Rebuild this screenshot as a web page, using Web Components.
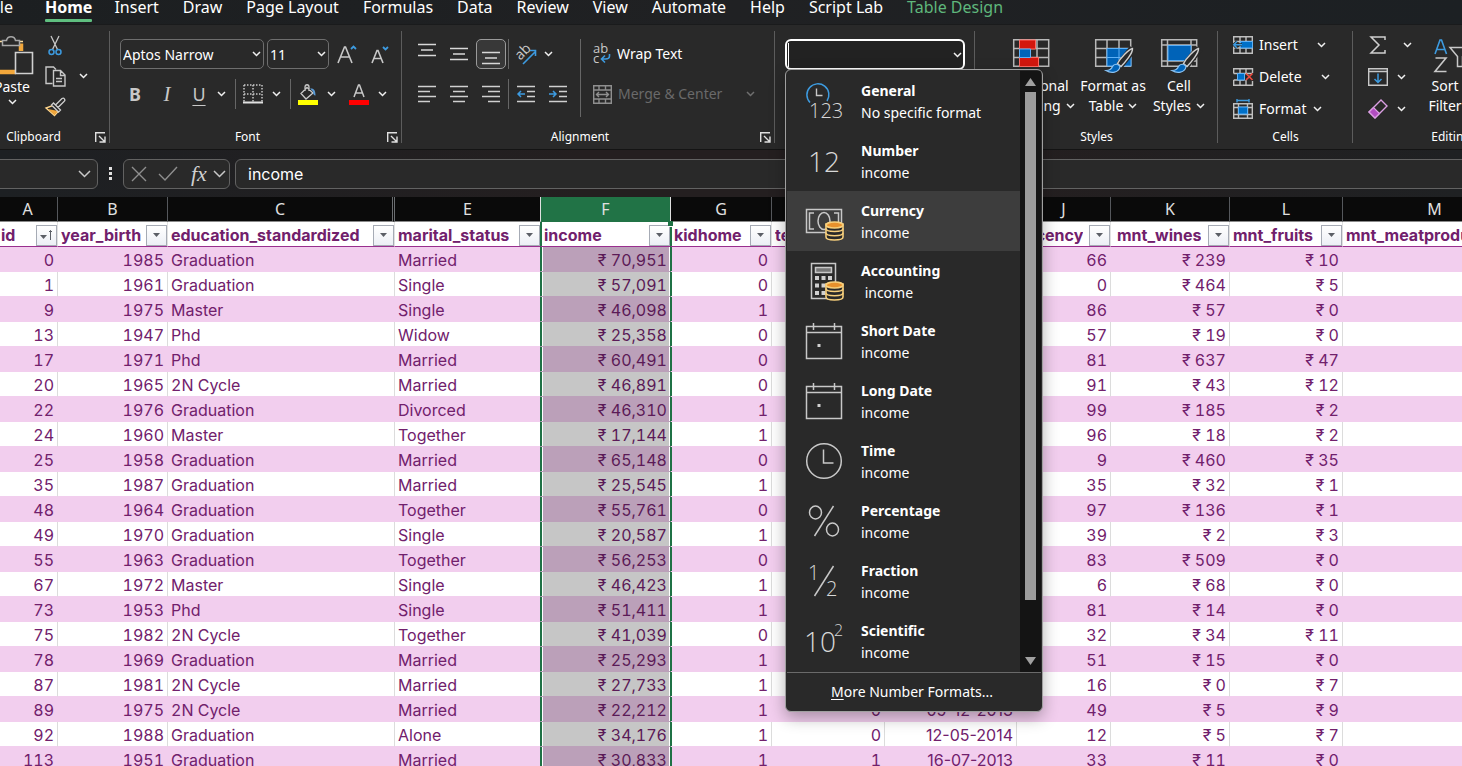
<!DOCTYPE html>
<html lang="en">
<head>
<meta charset="utf-8">
<title>Workbook</title>
<style>
html, body { margin: 0; height: 100%; }
body { background: #292929; font-family: "Noto Sans", "Open Sans", sans-serif; color: #fff; overflow: hidden; }
</style>
</head>
<body>
<excel-window></excel-window>

<script>
const define = (name, html, setup) => {
  const tpl = document.createElement('template');
  tpl.innerHTML = html;
  customElements.define(name, class extends HTMLElement {
    constructor() {
      super();
      this.attachShadow({ mode: 'open' }).append(tpl.content.cloneNode(true));
    }
    connectedCallback() { if (setup) setup(this, this.shadowRoot); }
  });
};

/* ---------- icons: [width, height, markup] ---------- */
const coins = `<g transform="translate(1 5)" fill="#292929" stroke="#f7cf7c" stroke-width="1.6"><path d="M21 18v13c0 2 4 3 8.500 3s8.500-1 8.500-3v-13z"/><path d="M21 22.500c0 2 4 3 8.500 3s8.500-1 8.500-3M21 26.800c0 2 4 3 8.500 3s8.500-1 8.500-3" fill="none"/><ellipse cx="29.500" cy="19" rx="8.500" ry="3" fill="#e8912d"/></g>`;
const calendar = `<path d="M2.500 5.500h35v32h-35zM2.500 11.500h35" /><path d="M9.500 2v7M30.500 2v7"/><path d="M13.500 23h3v3h-3z" fill="#d0d0d0" stroke="none"/>`;
const grid36 = `<path d="M.7.700h35v26.600h-35zM.7 9.500h35M.7 18.500h35M12 1v26M24 1v26" stroke="#b8b8b8" stroke-width="1.500"/>`;
const brush = `<path d="M38 9.500 25 26" stroke="#292929" stroke-width="8"/><path d="M37.500 9.500c-4 1-12.500 10-15 15l3.500 3c4-4 12-13.500 11.500-18z" stroke="#d0d0d0" stroke-width="1.400" fill="#292929"/><path d="M25 27.500c-2-3-6-3-7.500 0-1 2.500-3 4-6.500 4 5 3 13 2.500 14-4z" fill="#0063b8" stroke="#8cc4f4" stroke-width="1.200"/>`;
const ICONS = {
  chev: [9, 6, `<path d="M1 1l3.500 3.500L8 1" stroke="#f0f0f0" stroke-width="1.500"/>`],
  chevdim: [9, 6, `<path d="M1 1l3.500 3.500L8 1" stroke="#6f6f6f" stroke-width="1.500"/>`],
  chevwide: [13, 8, `<path d="M1 1l5.500 5.500L12 1" stroke="#c8c8c8" stroke-width="1.500"/>`],
  launcher: [11, 11, `<path d="M.7 10V.7H10M4 4l5.500 5.500M10 4.500V10H4.500" stroke="#e0e0e0" stroke-width="1.400"/>`],
  paste: [42, 40, `<path d="M5 8.500V37h20M30 8.500V16" stroke="#f2a73b" stroke-width="4.500"/><path d="M3 6.500h8M23 6.500h9" stroke="#ffdf9e" stroke-width="1.400"/><path d="M11.500 10.500v-5h4c1-5 8-5 9 0h4v5z" stroke="#a8a8a8" stroke-width="1.500" fill="#292929"/><path d="M24.500 17.500h17v21h-17z" stroke="#d0d0d0" stroke-width="1.600" fill="#292929"/>`],
  cut: [14, 21, `<path d="M3 1l6.500 13.500M11 1L4.500 14.500" stroke="#c8c8c8" stroke-width="1.300"/><circle cx="3.500" cy="17" r="2.500" stroke="#3d9be0" stroke-width="1.500"/><circle cx="10.500" cy="17" r="2.500" stroke="#3d9be0" stroke-width="1.500"/>`],
  copy: [21, 21, `<path d="M7.500 17.500h-6.500v-16.500h7.500l2.500 2.500" stroke="#c8c8c8" stroke-width="1.400"/><path d="M8.500 4.500h7l4.500 4.500v11h-11.500zM15.500 4.500v5h4.500M11 12.500h6M11 15.500h6" stroke="#c8c8c8" stroke-width="1.400"/>`],
  painter: [21, 20, `<path d="M1 11l8.500 7.500 4.500-5-5-5.500z" fill="#292929" stroke="#ffd68c" stroke-width="1.400"/><path d="M3 12l6.500 6 3.500-4z" fill="#f2a73b"/><path d="M6.500 8l2-2 7 7-2 2zM10.500 8l6.500-6.500q1.500-1 2.500.5t-.5 2.500L13 10.500" stroke="#d0d0d0" stroke-width="1.300" fill="#292929"/>`],
  grow: [20, 20, `<path d="M1 19L7.500 3h1L15 19M3.500 13h9" stroke="#c8c8c8" stroke-width="1.600"/><path d="M14 5l2.500-2.500L19 5" stroke="#3d9be0" stroke-width="1.800"/>`],
  shrink: [20, 20, `<path d="M2 19L7 6.500h1L13 19M4 14.500h7" stroke="#c8c8c8" stroke-width="1.600"/><path d="M13 3l2.500 2.500L18 3" stroke="#3d9be0" stroke-width="1.800"/>`],
  borders: [20, 20, `<path d="M1 1h18M1 10h18M1 1v17M10 1v17M19 1v17" stroke="#c8c8c8" stroke-width="1.500" stroke-dasharray="1.500 1.500"/><path d="M0 18.500h20" stroke="#e0e0e0" stroke-width="2"/>`],
  bucket: [20, 22, `<path d="M9 4.500l6 5.500-7 6-5-5.500zM7 8V4c0-3 4-3 4 0v4" stroke="#c8c8c8" stroke-width="1.300"/><path d="M12 5.500c4-.5 5.500 2 5.500 7-2 0-2.500-2.500-2.500-4z" fill="#5b9bd5"/><path d="M0 17h20v5H0z" fill="#ff0"/>`],
  fontcolor: [20, 22, `<path d="M5 14L9.500 2h1L15 14M6.500 10h7" stroke="#c8c8c8" stroke-width="1.500"/><path d="M0 17h20v5H0z" fill="#f00"/>`],
  atop: [18, 14, `<path d="M0 1.500h18M3 7h12M0 12.500h18" stroke="#d8d8d8" stroke-width="1.400"/>`],
  alignl: [18, 18, `<path d="M0 1.500h18M0 6.500h12M0 11.500h18M0 16.500h12" stroke="#d0d0d0" stroke-width="1.600"/>`],
  alignc: [18, 18, `<path d="M0 1.500h18M3 6.500h12M0 11.500h18M3 16.500h12" stroke="#d0d0d0" stroke-width="1.600"/>`],
  alignr: [18, 18, `<path d="M0 1.500h18M6 6.500h12M0 11.500h18M6 16.500h12" stroke="#d0d0d0" stroke-width="1.600"/>`],
  outdent: [18, 18, `<path d="M0 1.500h18M10 6.500h8M10 11.500h8M0 16.500h18" stroke="#d0d0d0" stroke-width="1.600"/><path d="M8 9H1M4 6L1 9l3 3" stroke="#3d9be0" stroke-width="1.500"/>`],
  indent: [18, 18, `<path d="M0 1.500h18M10 6.500h8M10 11.500h8M0 16.500h18" stroke="#d0d0d0" stroke-width="1.600"/><path d="M0 9h7M4 6l3 3-3 3" stroke="#3d9be0" stroke-width="1.500"/>`],
  orient: [21, 21, `<text class="reg" text-anchor="middle" transform="translate(10 11) rotate(-45)" font-size="14" fill="#c8c8c8">ab</text><path d="M7 20L19 8M14 6.500h5.500V12" stroke="#3d9be0" stroke-width="1.600"/>`],
  wrap: [18, 20, `<text class="reg" x="0" y="9" font-size="13" fill="#c8c8c8">ab</text><text class="reg" x="0" y="19" font-size="13" fill="#c8c8c8">c</text><path d="M16.500 10v2q0 3-4 3H8.500M12 11.500L8.500 15l3.500 3.500" stroke="#3d9be0" stroke-width="1.600"/>`],
  merge: [19, 19, `<path d="M.7.700h17.600v17.600H.7zM.7 5h17.600M.7 14h17.600M6 .7V5M12.500.7V5M6 14v4M12.500 14v4M3.500 9.500h12M6 7L3.500 9.500 6 12M13 7l2.500 2.500L13 12" stroke="#8f8f8f" stroke-width="1.400"/>`],
  cond: [36, 28, `${grid36}<path d="M6.500 1h16v9h-16zM6.500 18.500h19v9h-19z" fill="#d3170e" stroke="#ff6b62"/><path d="M6.500 10h11v8.500h-11z" fill="#0063b8" stroke="#5fb0f5"/>`],
  fmttable: [40, 35, `${grid36}<path d="M12 9.500h24v17.500H12z" fill="#0063b8" stroke="#5fb0f5" /><path d="M24 10v17M12 18.500h24" stroke="#5fb0f5"/>${brush}`],
  cellstyle: [40, 35, `<path d="M.7.700h35v26.600h-35zM.7 6h35M6.500 1v26M.7 22h35M30 1v26" stroke="#b8b8b8" stroke-width="1.500"/><path d="M7 6.500h23v15H7z" fill="#0063b8" stroke="#5fb0f5"/>${brush}`],
  insert: [20, 18, `<path d="M.7.700h18.600v16.600H.7zM.7 5.500h18M.7 12h18M7 1v16M13 1v16" stroke="#c0c0c0" stroke-width="1.400"/><path d="M7.500 5.500h12V12h-12z" fill="#0070c8" stroke="#5fb0f5"/><path d="M9 8.800H1M4 5.500L.8 8.800 4 12" stroke="#292929" stroke-width="3"/><path d="M9 8.800H1M4 5.500L.8 8.800 4 12" stroke="#3d9be0" stroke-width="1.500"/>`],
  delete: [20, 18, `<path d="M19.500 5V.7H.7V5.500M.7 12v5.300h18.800V13M.7 5.500H19M.7 12h11M7 1v4M13 1v4M7 12v5M13 12v5" stroke="#c0c0c0" stroke-width="1.400"/><path d="M4.500 5.500h7V12h-7z" fill="#0070c8" stroke="#5fb0f5"/><path d="M13 5.500l6.500 6.500M19.500 5.500L13 12" stroke="#f04a3e" stroke-width="1.600"/>`],
  format: [20, 20, `<path d="M4 0v3.500M16 0v3.500M4 1.500h12" stroke="#3d9be0" stroke-width="1.400"/><path d="M.7 4.700h18.600v14.600H.7zM.7 8.500h18.600M.7 15.500h18.600M5.500 5v14M14.500 5v14" stroke="#c0c0c0" stroke-width="1.400"/><path d="M5.500 8h9v7h-9z" fill="#0070c8" stroke="#5fb0f5"/>`],
  sigma: [16, 18, `<path d="M15 4V1H1l8 8-8 8h14v-3" stroke="#d0d0d0" stroke-width="1.500"/>`],
  fill: [20, 18, `<path d="M.7.700h18.600v16.600H.7zM.7 3.500h18.600" stroke="#c8c8c8" stroke-width="1.400"/><path d="M10 5.500v9M6.500 11l3.500 3.500 3.500-3.500" stroke="#3d9be0" stroke-width="1.500"/>`],
  eraser: [20, 20, `<path d="M1 13L13 1l6 6L7 19z" stroke="#dca0e4" stroke-width="1.400"/><path d="M1 13l4.500-4.500 6 6L7 19z" fill="#b14cc0" stroke="#dca0e4" stroke-width="1.200"/>`],
  sort: [36, 34, `<path d="M1 15L6 1h1.500l5 14M3 10.500h8" stroke="#3d9be0" stroke-width="1.600"/><path d="M1.500 19h10.500L1 32.500h11.500" stroke="#c8c8c8" stroke-width="1.600"/><path d="M16 8.500h20l-7.500 9v10l-5 0v-10z" stroke="#c8c8c8" stroke-width="1.500"/>`],
  cancel: [16, 16, `<path d="M1 1l14 14M15 1L1 15" stroke="#8f8f8f" stroke-width="1.400"/>`],
  check: [20, 16, `<path d="M1 8l6 6L19 1" stroke="#8f8f8f" stroke-width="1.400"/>`],
  dots: [3, 14, `<path d="M0 0h3v3H0zM0 5h3v3H0zM0 10h3v3H0z" fill="#e0e0e0"/>`],
  tri: [7, 4, `<path d="M0 0h7L3.500 4z" fill="#5b5f66"/>`],
  sorted: [13, 10, `<path d="M0 5h7L3.500 9z" fill="#5b5f66"/><path d="M10.500 10V.5M9 2l1.500-1.500L12 2" stroke="#5b5f66"/>`],
  up: [11, 8, `<path d="M5.500 0L11 8H0z" fill="#a0a0a0"/>`],
  down: [11, 8, `<path d="M0 0h11L5.500 8z" fill="#a0a0a0"/>`],
  general: [40, 40, `<path d="M6 21.500A11 11 0 1 1 23 20" stroke="#3d9be0" stroke-width="1.500"/><path d="M12.500 7.500v7h6" stroke="#c8c8c8" stroke-width="1.400"/><text x="5" y="37" font-size="20" fill="#d8d8d8">123</text>`],
  number: [40, 40, `<text x="4" y="31" font-size="28" fill="#d8d8d8">12</text>`],
  currency: [40, 40, `<path d="M2.500 8.500h35v23h-35z" /><path d="M10 12H5.500v16H10M30 12h4.500v16H30" /><ellipse cx="20" cy="20" rx="6" ry="8.500"/>${coins}`],
  accounting: [40, 40, `<path d="M7.500 2.500h24v35h-24z"/><path d="M11.500 6.500h16v5h-16z" fill="#777"/><path d="M11 15h4v4h-4zM17.500 15h4v4h-4zM24 15h4v4h-4zM11 22.500h4v4h-4zM17.500 22.500h4v4h-4zM11 30h4v4h-4zM17.500 30h4v4h-4z" fill="#d0d0d0" stroke="none"/>${coins}`],
  date: [40, 40, calendar],
  time: [40, 40, `<circle cx="20" cy="20" r="17.300"/><path d="M19.500 8.500v13.500h10"/>`],
  percent: [40, 40, `<ellipse cx="11.500" cy="11.500" rx="6" ry="6.500"/><ellipse cx="28.500" cy="28.500" rx="6" ry="6.500"/><path d="M29.500 5L10.500 35"/>`],
  fraction: [40, 40, `<path d="M29.500 5L10.500 35"/><text x="4" y="19" font-size="20" fill="#d8d8d8">1</text><text x="22" y="35" font-size="20" fill="#d8d8d8">2</text>`],
  scientific: [40, 40, `<text x="0" y="31" font-size="28" fill="#d8d8d8">10</text><text x="30" y="15" font-size="16" fill="#d8d8d8">2</text>`]
};
const OUTLINED = ['currency', 'accounting', 'date', 'time', 'percent', 'fraction'];

customElements.define('rb-icon', class extends HTMLElement {
  connectedCallback() {
    if (this.shadowRoot) return;
    const name = this.getAttribute('name');
    const [w, h, body] = ICONS[name];
    const stroke = OUTLINED.includes(name) ? 'stroke="#c8c8c8" stroke-width="1.500"' : '';
    this.attachShadow({ mode: 'open' }).innerHTML = `<style>
      :host { display: block; flex: none; }
      svg { display: block; overflow: visible; }
      text { font-family: "Open Sans", "Noto Sans", sans-serif; font-weight: 300; stroke: none; }
      text.reg { font-weight: 400; }
    </style><svg width="${w}" height="${h}" viewBox="0 0 ${w} ${h}" fill="none" aria-hidden="true" ${stroke}>${body}</svg>`;
  }
});

/* ---------- ribbon building blocks ---------- */
define('rb-button', `<style>
  :host { display: block; flex: none; width: 32px; height: 30px; }
  :host([size="chev"]) { width: 20px; }
  :host([size="icon"]) { width: 26px; }
  :host([size="mid"]) { width: 29px; }
  :host([size="text"]) { width: auto; }
  :host([size="big"]) { width: 66px; height: 88px; }
  button { all: unset; box-sizing: border-box; width: 100%; height: 100%; display: flex; align-items: center; justify-content: center; gap: 6px; white-space: nowrap; font-size: 14px; line-height: 20px; color: inherit; }
  :host([pressed]) button { width: 30px; margin-left: 1px; border: 1px solid #9a9a9a; border-radius: 5px; background: #383838; }
  :host([size="text"]) button { justify-content: flex-start; }
  :host([size="big"]) button { flex-direction: column; justify-content: flex-start; gap: 2px; }
</style><button type="button"><slot></slot></button>`, (host, root) => {
  const label = host.getAttribute('label');
  if (label) root.querySelector('button').setAttribute('aria-label', label);
});

define('rb-sep', `<style>
  :host { display: block; flex: none; width: 1px; height: 30px; margin: 0 4px; background: #666; }
  :host([tight]) { margin: 0 1px; }
  :host([tall]) { height: 78px; margin-left: 6px; }
</style>`);

define('rb-combo', `<style>
  :host { display: block; flex: none; position: relative; }
  select { appearance: none; box-sizing: border-box; width: 100%; height: 30px; margin: 0; padding: 0 20px 0 2px; border: 1px solid #6e6e6e; border-radius: 5px; background: #292929; color: #fff; font: 14px "Noto Sans", sans-serif; display: block; }
  rb-icon { position: absolute; right: 3px; top: 12px; pointer-events: none; }
</style><select></select><rb-icon name="chev"></rb-icon>`, (host, root) => {
  const s = root.querySelector('select');
  s.setAttribute('aria-label', host.getAttribute('label'));
  s.append(new Option(host.getAttribute('value')));
});

define('rb-group', `<style>
  :host { display: flex; flex: none; flex-direction: column; box-sizing: border-box; height: 124px; position: relative; }
  .body { height: 100px; flex: none; }
  footer { display: flex; align-items: center; height: 24px; padding: 0 4px; font-size: 12px; line-height: 24px; }
  footer span { flex: 1; text-align: center; }
  rb-icon { margin-left: 6px; }
  :host::after { content: ""; position: absolute; right: 0; top: 6px; height: 112px; width: 1px; background: #5c5c5c; }
  :host([last])::after { display: none; }
</style><div class="body"><slot></slot></div><footer><span></span></footer>`, (host, root) => {
  root.querySelector('span').textContent = host.getAttribute('label') || '';
  if (host.hasAttribute('launcher')) {
    const i = document.createElement('rb-icon');
    i.setAttribute('name', 'launcher');
    root.querySelector('footer').append(i);
  }
});

/* ---------- tabs ---------- */
define('rb-tabs', `<style>
  :host { display: block; height: 24px; background: linear-gradient(90deg, #1c1f21, #202123 50%, #1c2023); overflow: hidden; border-bottom: 1px solid #1a1b1c; }
  nav { display: flex; gap: 24px; height: 24px; margin-left: -13px; }
  a { color: #fff; text-decoration: none; font-size: 16px; line-height: 22px; height: 22px; margin-top: -4px; white-space: nowrap; }
  a:first-child { width: 26px; margin-right: 8px; text-align: right; }
  a.on { font-weight: 700; margin-right: -2px; position: relative; }
  a.on::after { content: ""; position: absolute; left: 0; right: 0; top: 23px; height: 3px; border-radius: 1px; background: #5fbf7f; }
  a.ctx { color: #5fb77c; }
</style><nav aria-label="Ribbon tabs"><a href="#">File</a><a href="#" class="on">Home</a><a href="#">Insert</a><a href="#">Draw</a><a href="#">Page Layout</a><a href="#">Formulas</a><a href="#">Data</a><a href="#">Review</a><a href="#">View</a><a href="#">Automate</a><a href="#">Help</a><a href="#">Script Lab</a><a href="#" class="ctx">Table Design</a></nav>`);

/* ---------- ribbon ---------- */
define('rb-ribbon', `<style>
  :host { display: flex; height: 124px; background: #292929; overflow: hidden; }
  .row { display: flex; align-items: center; height: 30px; }
  .rows { display: flex; flex-direction: column; gap: 10px; padding-top: 14px; }
  .row.split { align-items: flex-start; padding: 14px 0 0 9px; height: auto; }
  .split .rows { padding-top: 0; }
  .clip { width: 136px; margin-left: -26px; }
  .clipbody { display: flex; padding: 5px 0 0 5px; }
  .clipbody rb-button[size="big"] { margin-top: 5px; margin-right: -3px; }
  .cliprows { display: flex; flex-direction: column; gap: 1px; }
  .font { width: 292px; } .font .rows { padding-left: 9px; }
  .font .combos { gap: 3px; padding-left: 1px; }
  .family { width: 144px; } .size { width: 62px; }
  .align { width: 373px; } .num { width: 200px; } .styles { width: 243px; } .cells { width: 135px; } .edit { width: 196px; }
  .gap { margin-left: 5px; }
  .near { margin-left: -4px; }
  .b { font-weight: 700; font-size: 18px; color: #c8c8c8; }
  .i { font-style: italic; font-family: "Liberation Serif", serif; font-size: 21px; color: #c8c8c8; }
  .u { text-decoration: underline; text-underline-offset: 4px; font-size: 18px; color: #c8c8c8; }
  .high { padding-bottom: 8px; }
  .low { padding-top: 8px; }
  .dim { color: #6a6a6a; }
  .far { margin-left: 18px; }
  .wraps { padding-left: 8px; }
  .numbox { margin: 14px 0 0 10px; width: 180px; height: 31px; box-sizing: border-box; border: 2px solid #fff; border-radius: 6px; display: flex; align-items: center; background: #222; }
  .numbox input { all: unset; flex: 1; min-width: 0; height: 24px; margin-left: 1px; border-left: 1px solid #fff; }
  .numbox rb-button { margin-right: -4px; }
  .bigs { display: flex; padding: 14px 0 0 23px; }
  .bigs rb-button:nth-child(2) { margin-left: 16px; }
  .lines { display: grid; justify-items: center; line-height: 20px; }
  .ic { height: 35px; }
  .off { margin-left: 4px; }
  .ln { display: flex; align-items: center; gap: 5px; }
  .three { display: flex; flex-direction: column; gap: 2px; padding: 5px 0 0 15px; }
  .ef { display: flex; }
  .ef .three { width: 54px; padding-left: 12px; }
  .sortf { padding-top: 14px; }
  .mid { margin-left: 6px; } .mid2 { margin-left: 14px; }
</style>
<rb-group class="clip" label="Clipboard" launcher>
  <div class="clipbody">
    <rb-button size="big"><rb-icon name="paste"></rb-icon><span>Paste</span><rb-icon name="chev"></rb-icon></rb-button>
    <div class="cliprows">
      <rb-button size="icon" label="Cut"><rb-icon name="cut"></rb-icon></rb-button>
      <div class="row"><rb-button size="icon" label="Copy"><rb-icon name="copy"></rb-icon></rb-button><rb-button class="gap" size="chev" label="Copy options"><rb-icon name="chev"></rb-icon></rb-button></div>
      <rb-button size="icon" label="Format Painter"><rb-icon name="painter"></rb-icon></rb-button>
    </div>
  </div>
</rb-group>
<rb-group class="font" label="Font" launcher>
  <div class="rows">
    <div class="row combos"><rb-combo class="family" label="Font" value="Aptos Narrow"></rb-combo><rb-combo class="size" label="Font size" value="11"></rb-combo><rb-button size="mid" label="Increase font size"><rb-icon name="grow"></rb-icon></rb-button><rb-button label="Decrease font size"><rb-icon name="shrink"></rb-icon></rb-button></div>
    <div class="row"><rb-button><span class="b">B</span></rb-button><rb-button><span class="i">I</span></rb-button><rb-button><span class="u">U</span></rb-button><rb-button class="near" size="chev" label="Underline options"><rb-icon name="chev"></rb-icon></rb-button><rb-sep></rb-sep><rb-button size="icon" label="Borders"><rb-icon name="borders"></rb-icon></rb-button><rb-button size="chev" label="Border options"><rb-icon name="chev"></rb-icon></rb-button><rb-sep></rb-sep><rb-button size="icon" label="Fill color"><rb-icon name="bucket"></rb-icon></rb-button><rb-button size="chev" label="Fill options"><rb-icon name="chev"></rb-icon></rb-button><rb-button class="gap" size="icon" label="Font color"><rb-icon name="fontcolor"></rb-icon></rb-button><rb-button size="chev" label="Font color options"><rb-icon name="chev"></rb-icon></rb-button></div>
  </div>
</rb-group>
<rb-group class="align" label="Alignment" launcher>
  <div class="row split">
    <div class="rows">
      <div class="row"><rb-button label="Top align"><rb-icon name="atop" class="high"></rb-icon></rb-button><rb-button label="Middle align"><rb-icon name="atop"></rb-icon></rb-button><rb-button pressed label="Bottom align"><rb-icon name="atop" class="low"></rb-icon></rb-button><rb-sep tight></rb-sep><rb-button label="Orientation"><rb-icon name="orient"></rb-icon></rb-button><rb-button class="near" size="chev" label="Orientation options"><rb-icon name="chev"></rb-icon></rb-button></div>
      <div class="row"><rb-button label="Align left"><rb-icon name="alignl"></rb-icon></rb-button><rb-button label="Center"><rb-icon name="alignc"></rb-icon></rb-button><rb-button label="Align right"><rb-icon name="alignr"></rb-icon></rb-button><rb-sep tight></rb-sep><rb-button label="Decrease indent"><rb-icon name="outdent"></rb-icon></rb-button><rb-button label="Increase indent"><rb-icon name="indent"></rb-icon></rb-button></div>
    </div>
    <rb-sep tall></rb-sep>
    <div class="rows wraps">
      <rb-button size="text"><rb-icon name="wrap"></rb-icon><span>Wrap Text</span></rb-button>
      <div class="row dim"><rb-button size="text"><rb-icon name="merge"></rb-icon><span>Merge &amp; Center</span></rb-button><rb-button class="far" size="chev" label="Merge options"><rb-icon name="chevdim"></rb-icon></rb-button></div>
    </div>
  </div>
</rb-group>
<rb-group class="num" label="Number">
  <div class="numbox"><input type="text" aria-label="Number format"><rb-button size="chev" label="Number format list"><rb-icon name="chev"></rb-icon></rb-button></div>
</rb-group>
<rb-group class="styles" label="Styles">
  <div class="bigs">
    <rb-button size="big"><rb-icon class="ic" name="cond"></rb-icon><span class="lines"><span>Conditional</span><span class="ln">Formatting <rb-icon name="chev"></rb-icon></span></span></rb-button>
    <rb-button size="big"><rb-icon class="ic off" name="fmttable"></rb-icon><span class="lines"><span>Format as</span><span class="ln">Table <rb-icon name="chev"></rb-icon></span></span></rb-button>
    <rb-button size="big"><rb-icon class="ic off" name="cellstyle"></rb-icon><span class="lines"><span>Cell</span><span class="ln">Styles <rb-icon name="chev"></rb-icon></span></span></rb-button>
  </div>
</rb-group>
<rb-group class="cells" label="Cells">
  <div class="three">
    <div class="row"><rb-button size="text"><rb-icon name="insert"></rb-icon><span>Insert</span></rb-button><rb-button class="mid2" size="chev" label="Insert options"><rb-icon name="chev"></rb-icon></rb-button></div>
    <div class="row"><rb-button size="text"><rb-icon name="delete"></rb-icon><span>Delete</span></rb-button><rb-button class="mid2" size="chev" label="Delete options"><rb-icon name="chev"></rb-icon></rb-button></div>
    <rb-button size="text"><rb-icon name="format"></rb-icon><span>Format</span><rb-icon name="chev"></rb-icon></rb-button>
  </div>
</rb-group>
<rb-group class="edit" label="Editing" last>
  <div class="ef">
    <div class="three">
      <div class="row"><rb-button size="icon" label="AutoSum"><rb-icon name="sigma"></rb-icon></rb-button><rb-button class="mid" size="chev" label="AutoSum options"><rb-icon name="chev"></rb-icon></rb-button></div>
      <div class="row"><rb-button size="icon" label="Fill"><rb-icon name="fill"></rb-icon></rb-button><rb-button size="chev" label="Fill options"><rb-icon name="chev"></rb-icon></rb-button></div>
      <div class="row"><rb-button size="icon" label="Clear"><rb-icon name="eraser"></rb-icon></rb-button><rb-button size="chev" label="Clear options"><rb-icon name="chev"></rb-icon></rb-button></div>
    </div>
    <rb-button class="sortf" size="big"><rb-icon class="ic" name="sort"></rb-icon><span class="lines"><span>Sort &amp;</span><span class="ln">Filter <rb-icon name="chev"></rb-icon></span></span></rb-button>
  </div>
</rb-group>`);

/* ---------- formula bar ---------- */
define('formula-bar', `<style>
  :host { display: flex; align-items: center; height: 48px; box-sizing: border-box; overflow: hidden; background: linear-gradient(90deg, #1d2023, #241f20 40%, #241f20 70%, #1f2123); border-top: 1px solid #141414; }
  .box { box-sizing: border-box; height: 30px; border: 1px solid #626262; border-radius: 6px; background: #292929; display: flex; align-items: center; flex: none; }
  .name { width: 108px; margin-left: -10px; padding-right: 6px; }
  input { all: unset; flex: 1; min-width: 0; font: 16px/28px Inter, sans-serif; }
  button { all: unset; display: flex; justify-content: center; align-items: center; }
  .dots { margin: 0 11px; }
  .tools { width: 107px; gap: 11px; padding-left: 7px; }
  .fx { font: italic 22px/26px "Liberation Serif", serif; color: #d0d0d0; }
  .tools .fx { margin-left: 2px; margin-right: -5px; }
  .formula { flex: 1; margin-left: 5px; margin-right: -8px; padding-left: 12px; }
</style>
<div class="box name"><input type="text" aria-label="Name box"><button type="button" aria-label="Name list"><rb-icon name="chevwide"></rb-icon></button></div>
<rb-icon class="dots" name="dots"></rb-icon>
<div class="box tools"><button type="button" aria-label="Cancel"><rb-icon name="cancel"></rb-icon></button><button type="button" aria-label="Enter"><rb-icon name="check"></rb-icon></button><button type="button" class="fx">fx</button><button type="button" aria-label="Function list"><rb-icon name="chevwide"></rb-icon></button></div>
<div class="box formula"><input type="text" aria-label="Formula" value="income"></div>`);

/* ---------- sheet ---------- */
const COLS = [['A', 'id', 60], ['B', 'year_birth', 110], ['C', 'education_standardized', 227], ['E', 'marital_status', 146], ['F', 'income', 130], ['G', 'kidhome', 101], ['H', 'teenhome', 113], ['I', 'dt_customer', 132], ['J', 'recency', 94], ['K', 'mnt_wines', 119], ['L', 'mnt_fruits', 113], ['M', 'mnt_meatproducts', 184]];
const ROWS = `0|1985|Graduation|Married|70,951|0|||66|239|10
1|1961|Graduation|Single|57,091|0|||0|464|5
9|1975|Master|Single|46,098|1|||86|57|0
13|1947|Phd|Widow|25,358|0|||57|19|0
17|1971|Phd|Married|60,491|0|||81|637|47
20|1965|2N Cycle|Married|46,891|0|||91|43|12
22|1976|Graduation|Divorced|46,310|1|||99|185|2
24|1960|Master|Together|17,144|1|||96|18|2
25|1958|Graduation|Married|65,148|0|||9|460|35
35|1987|Graduation|Married|25,545|1|||35|32|1
48|1964|Graduation|Together|55,761|0|||97|136|1
49|1970|Graduation|Single|20,587|1|||39|2|3
55|1963|Graduation|Together|56,253|0|||83|509|0
67|1972|Master|Single|46,423|1|||6|68|0
73|1953|Phd|Single|51,411|1|||81|14|0
75|1982|2N Cycle|Together|41,039|0|||32|34|11
78|1969|Graduation|Married|25,293|1|||51|15|0
87|1981|2N Cycle|Married|27,733|1|||16|0|7
89|1975|2N Cycle|Married|22,212|1|0|05-12-2013|49|5|9
92|1988|Graduation|Alone|34,176|1|0|12-05-2014|12|5|7
113|1951|Graduation|Married|30,833|1|1|16-07-2013|33|11|0`.split('\n').map(r => r.split('|'));

define('sheet-grid', `<style>
  :host { display: block; flex: 1; min-height: 0; overflow: hidden; background: #fff; }
  table { table-layout: fixed; border-collapse: separate; border-spacing: 0; margin-left: -2px; font: 16px/22px Inter, "Noto Sans", sans-serif; font-feature-settings: "tnum"; color: #71206c; }
  th, td { padding: 0 3px; box-sizing: border-box; overflow: hidden; white-space: nowrap; text-align: right; }
  .letters th { height: 25px; background: #0a0a0a; color: #e0e0e0; font: 16px/24px "Noto Sans", sans-serif; text-align: center; border-right: 1px solid #55585c; border-bottom: 1px solid #8a8a8a; }
  .letters th:nth-child(3) { border-right: 3px double #6a6d70; }
  .letters th.sel { background: #217346; border-color: #e0e0e0; border-bottom-color: #217346; }
  .letters th.pre { border-right-color: #e0e0e0; }
  .names th { height: 25px; border-bottom: 1px solid #992f8e; border-right: 1px solid #e1e1e1; font-weight: 700; padding-right: 0; padding-top: 2px; line-height: 22px; }
  .names div { display: flex; justify-content: space-between; align-items: center; height: 22px; }
  .names span { overflow: hidden; }
  .names .wines { padding-left: 3px; }
  .names button { all: unset; box-sizing: border-box; flex: none; width: 21px; height: 21px; border: 1px solid #a6abb5; background: linear-gradient(#fff, #eceff5); display: flex; align-items: center; justify-content: center; }
  td { height: 25px; padding-top: 2px; border-bottom: 1px solid #f2ceee; border-right: 1px solid #dcdcdc; }
  td.date { font-feature-settings: normal; }
  tr.odd td { background: #f2ceee; border-right-color: #f2ceee; }
  .text { text-align: left; }
  td.sel { background: #c6c6c6; color: #5b1a57; border-bottom-color: #bba0b9; }
  tr.odd td.sel { background: #bba0b9; }
  tbody td.sel, .names th.sel { border-right: 1px solid #1f7145; box-shadow: inset 1px 0 #1f7145, inset 2px 0 #fff, inset -1px 0 #fff; }
  tr.odd td.sel { border-right-color: #1f7145; }
  td.pre, .names th.pre, tr.odd td.pre { border-right-color: #1f7145; }
  td.post, .names th.post { box-shadow: inset 1px 0 #1f7145; }
  .names th.sel { position: relative; overflow: visible; }
  .names th.sel::after { content: ""; position: absolute; right: -3px; top: -1px; width: 5px; height: 5px; background: #1f7145; border-bottom: 1px solid #fff; }
</style><table><colgroup></colgroup><thead><tr class="letters"></tr><tr class="names"></tr></thead><tbody></tbody></table>`, (host, root) => {
  const mark = i => i === 4 ? 'sel' : i === 3 ? 'pre' : i === 5 ? 'post' : i === 7 ? 'date' : '';
  root.querySelector('colgroup').innerHTML = COLS.map(c => `<col style="width:${c[2]}px">`).join('');
  root.querySelector('table').style.width = COLS.reduce((n, c) => n + c[2], 0) + 'px';
  root.querySelector('.letters').innerHTML = COLS.map((c, i) => `<th scope="col" class="${mark(i)}">${c[0]}</th>`).join('');
  root.querySelector('.names').innerHTML = COLS.map((c, i) => `<th scope="col" class="${mark(i)}"><div><span class="${i === 9 ? 'wines' : ''}">${c[1]}</span><button type="button" aria-label="Filter ${c[1]}"><rb-icon name="${i ? 'tri' : 'sorted'}"></rb-icon></button></div></th>`).join('');
  root.querySelector('tbody').innerHTML = ROWS.map((r, y) => `<tr class="${y % 2 ? '' : 'odd'}">${COLS.map((c, i) => {
    const v = r[i] || '';
    return `<td class="${mark(i)}${i === 2 || i === 3 ? ' text' : ''}">${v && [4, 9, 10].includes(i) ? '₹ ' + v : v}</td>`;
  }).join('')}</tr>`).join('');
});

/* ---------- number format menu ---------- */
define('format-item', `<style>
  :host { display: block; }
  button { all: unset; box-sizing: border-box; width: 100%; height: 60px; padding-left: 17px; display: flex; gap: 17px; align-items: center; font-size: 14px; line-height: 22px; }
  :host([active]) button { background: #3d3d3d; }
  div { padding-top: 2px; }
  b, span { display: block; white-space: pre; }
  b { font-weight: 700; }
</style><button type="button" role="menuitem"><div><b></b><span></span></div></button>`, (host, root) => {
  const icon = document.createElement('rb-icon');
  icon.setAttribute('name', host.getAttribute('icon'));
  root.querySelector('button').prepend(icon);
  root.querySelector('b').textContent = host.getAttribute('label');
  root.querySelector('span').textContent = host.getAttribute('sample');
});

define('format-menu', `<style>
  :host { display: block; box-sizing: border-box; width: 258px; border: 1px solid #a0a0a0; border-radius: 6px; background: #292929; box-shadow: 0 6px 16px rgba(0,0,0,.3); overflow: hidden; padding: 1px 1px 0; }
  .list { display: flex; height: 601px; }
  .items { flex: 1; }
  .bar { width: 21px; background: #141414; display: flex; flex-direction: column; align-items: center; padding: 7px 0; box-sizing: border-box; }
  .thumb { width: 11px; height: 508px; margin-top: 6px; margin-bottom: auto; background: #9b9b9b; }
  .more { all: unset; display: block; box-sizing: border-box; width: 100%; height: 39px; border-top: 1px solid #6a6a6a; text-align: center; font-size: 14px; line-height: 38px; padding-right: 4px; }
  u { text-underline-offset: 2px; }
</style>
<div class="list"><div class="items" role="menu">
<format-item icon="general" label="General" sample="No specific format"></format-item>
<format-item icon="number" label="Number" sample="income"></format-item>
<format-item icon="currency" label="Currency" sample="income" active></format-item>
<format-item icon="accounting" label="Accounting" sample=" income"></format-item>
<format-item icon="date" label="Short Date" sample="income"></format-item>
<format-item icon="date" label="Long Date" sample="income"></format-item>
<format-item icon="time" label="Time" sample="income"></format-item>
<format-item icon="percent" label="Percentage" sample="income"></format-item>
<format-item icon="fraction" label="Fraction" sample="income"></format-item>
<format-item icon="scientific" label="Scientific" sample="income"></format-item>
</div><div class="bar"><rb-icon name="up"></rb-icon><div class="thumb"></div><rb-icon name="down"></rb-icon></div></div>
<button type="button" class="more"><u>M</u>ore Number Formats...</button>`);

define('excel-window', `<style>
  :host { display: flex; flex-direction: column; height: 100vh; position: relative; overflow: hidden; }
  format-menu { position: absolute; left: 785px; top: 69px; }
</style><rb-tabs></rb-tabs><rb-ribbon></rb-ribbon><formula-bar></formula-bar><sheet-grid></sheet-grid><format-menu></format-menu>`);
</script>
</body>
</html>
